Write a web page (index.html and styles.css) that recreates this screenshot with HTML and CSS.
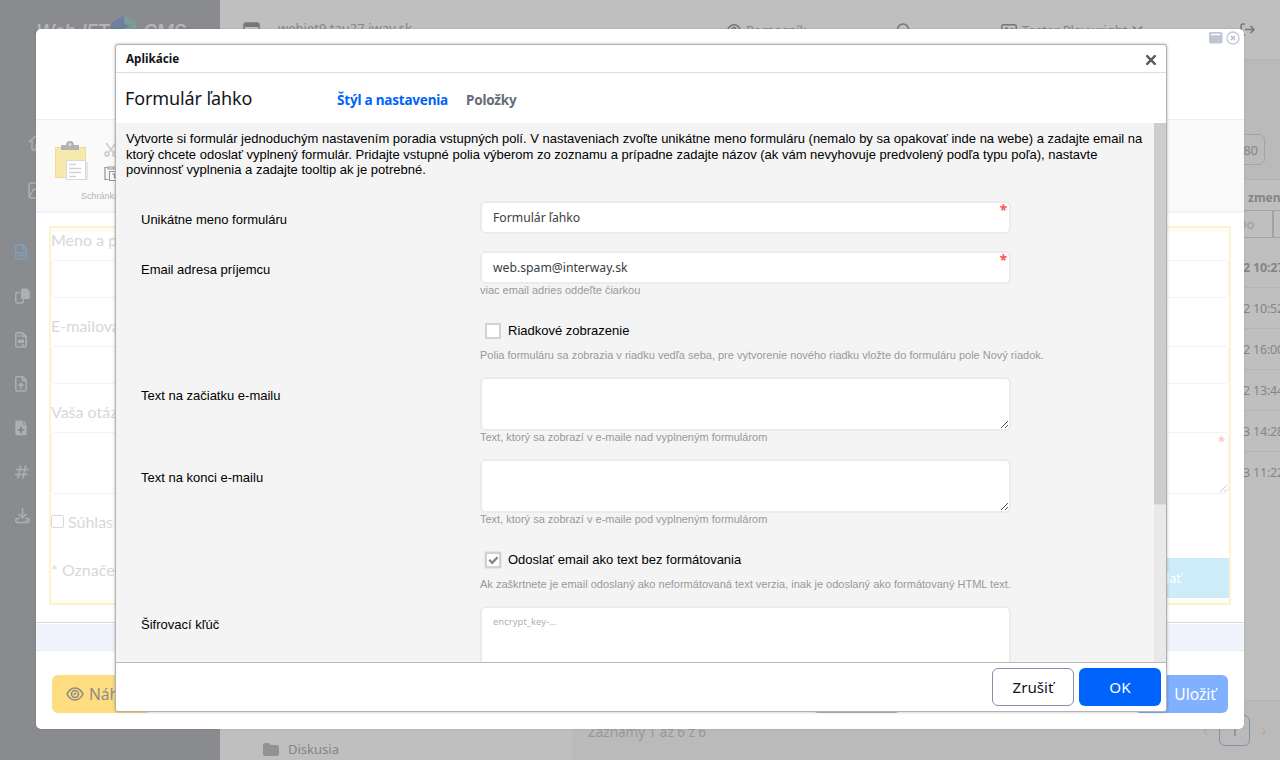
FILE: index.html
```
<!DOCTYPE html>
<html lang="sk">
<head>
<meta charset="utf-8">
<title>Aplikácie</title>
<link rel="stylesheet" href="styles.css">
</head>
<body>
<div class="app">
  <aside class="sidebar">
    <div class="logo">
      <span>WebJET</span>
      <svg width="26" height="30" viewBox="0 0 26 30"><path d="M0 8 13 0v12L0 20z" fill="#737d9f"/><path d="M13 0l12 7-12 7z" fill="#7b9b98"/><path d="M0 13l13-5 12 8-12 8z" fill="#66829c"/><path d="M12 14l13-5v7l-13 8z" fill="#79a293"/></svg>
      <span>CMS</span>
    </div>
    <div class="main-icons">
      <svg width="20" height="18" viewBox="0 0 20 18"><path d="M1 9 10 1l9 8M4 7v8.500a1.500 1.500 0 0 0 1.500 1.500H8v-5h4v5h3"/></svg>
      <svg width="20" height="18" viewBox="0 0 20 18"><path d="M19 1H3a2 2 0 0 0-2 2v11a2 2 0 0 0 2 2h16M2 14l3-6q.6-1 2-1h10"/></svg>
    </div>
    <nav class="side-nav">
      <svg class="active" viewBox="0 0 16 16"><path d="M2.500.8h5.200l3.500 3.500v9.400a1.400 1.400 0 0 1-1.400 1.400H2.200A1.400 1.400 0 0 1 .8 13.700V2.200A1.400 1.400 0 0 1 2.500.8zM7.500 1v3.500H11M3.300 8.800h5.400M3.300 11.500h5.400"/></svg>
      <svg viewBox="0 0 16 16"><path d="M4 4.500H2.300A1.500 1.500 0 0 0 .8 6v7.500A1.500 1.500 0 0 0 2.300 15h4.500a1.500 1.500 0 0 0 1.500-1.500V12"/><path class="fill" d="M7.500.5h4.500L14.800 3v6.500a1.500 1.500 0 0 1-1.500 1.500H7.500A1.500 1.500 0 0 1 6 9.500V2A1.500 1.500 0 0 1 7.500.5z"/></svg>
      <svg viewBox="0 0 16 16"><path d="M2.200.8h5.500l3.500 3.500v9.400a1.400 1.400 0 0 1-1.400 1.400H2.200A1.400 1.400 0 0 1 .8 13.700V2.200A1.400 1.400 0 0 1 2.200.8zM7.500 1v3.500H11M3 4h2M7 13h2"/><path class="fill" d="M3 7.500h6v3.500H3z"/></svg>
      <svg viewBox="0 0 16 16"><path d="M2.200.8h5.500l3.500 3.500v9.400a1.400 1.400 0 0 1-1.400 1.400H2.200A1.400 1.400 0 0 1 .8 13.700V2.200A1.400 1.400 0 0 1 2.200.8zM7.500 1v3.500H11M6 12.500V7.500M3.800 9.500 6 7.300l2.200 2.200"/></svg>
      <svg viewBox="0 0 16 16"><path class="fill" d="M1.500.5h6v4h4V14a1.300 1.300 0 0 1-1.300 1.300H1.500A1.300 1.300 0 0 1 .3 14V1.800A1.300 1.300 0 0 1 1.500.5zM8.500.5l3 3h-3z"/><path class="cut" d="M6 7.200v5.200M3.400 9.800h5.200"/></svg>
      <svg viewBox="0 0 16 16"><path d="M5.500 2 3 14M10.500 2 8 14M1.500 5.500H13M.5 10.500H12"/></svg>
      <svg viewBox="0 0 16 16"><path d="M7.500.5v9M4 6.300l3.500 3.500L11 6.300M4 10.500H2.300A1.500 1.500 0 0 0 .8 12v1a1.500 1.500 0 0 0 1.500 1.500h10.400a1.500 1.500 0 0 0 1.500-1.500v-1a1.500 1.500 0 0 0-1.500-1.500H11M11 12.700h1"/></svg>
    </nav>
  </aside>
  <header class="topbar">
    <div class="domain">
      <svg width="17" height="16" viewBox="0 0 17 16"><rect x="1" y="1" width="15" height="14" rx="2" /><path d="M1 3h15" stroke-width="4"/></svg>
      <span>webjet9.tau27.iway.sk</span>
    </div>
    <div class="help">
      <svg width="14" height="14" viewBox="0 0 14 14"><circle cx="7" cy="7" r="6.200"/><path d="M5 5.500a2 2 0 1 1 2.500 2L7 8.500M7 10v1"/></svg>
      <span>Pomocník</span>
    </div>
    <div class="search"><svg width="14" height="14" viewBox="0 0 14 14"><circle cx="7" cy="6.500" r="5.500"/></svg></div>
    <div class="user">
      <svg width="16" height="14" viewBox="0 0 16 14"><rect x=".8" y=".8" width="14.400" height="12.400" rx="1.500"/><path d="M9.500 5h3M9.500 8h3"/><circle cx="5.500" cy="5" r="1"/></svg>
      <span>Tester Playwright</span>
      <svg width="11" height="10" viewBox="0 0 11 10"><path d="M1 2.500l4.500 4.500L10 2.500"/></svg>
    </div>
    <div class="logout"><svg width="15" height="13" viewBox="0 0 15 13"><path d="M5 1H3a2 2 0 0 0-2 2v7a2 2 0 0 0 2 2h2M5 6.500h9M10.500 3l3.500 3.500-3.500 3.500"/></svg></div>
  </header>
  <section class="tree">
    <div class="tree-item">
      <svg width="16" height="13" viewBox="0 0 16 13"><path d="M2 0h4l2 2h6a2 2 0 0 1 2 2v7a2 2 0 0 1-2 2H2a2 2 0 0 1-2-2V2a2 2 0 0 1 2-2z" fill="#929397"/></svg>
      <span>Diskusia</span>
    </div>
  </section>
  <main class="list">
    <div class="list-tools"><span class="page-size">80</span></div>
    <div class="list-head">zmen</div>
    <div class="list-filter"><span>Do</span><span></span></div>
    <div class="row strong">2 10:27</div>
    <div class="row">2 10:52</div>
    <div class="row">2 16:00</div>
    <div class="row">2 13:44</div>
    <div class="row">3 14:28</div>
    <div class="row last">3 11:22</div>
    <footer class="list-foot">
      <span class="count">Záznamy 1 až 6 z 6</span>
      <div class="pager"><i>‹</i><b>1</b><i>›</i></div>
    </footer>
  </main>
</div>

<div class="editor">
  <header class="editor-head">
    <svg width="14" height="12" viewBox="0 0 14 12"><rect width="13.500" height="11.500" rx="2" fill="#bfc3d3"/><path d="M2 2.500h9.500" stroke="#fff" stroke-width="1.500"/></svg>
    <svg width="14" height="14" viewBox="0 0 14 14"><circle cx="7" cy="7" r="6" fill="none" stroke="#c6c9d8" stroke-width="1.300"/><path d="M5 5l4 4M9 5l-4 4" stroke="#b7bbcd" stroke-width="1.400"/></svg>
  </header>
  <div class="ribbon">
    <svg width="34" height="42" viewBox="0 0 34 42"><rect x=".5" y="7.500" width="30" height="30" fill="#f6e9ae" stroke="#f0dc95"/><path d="M6 5h5a4 4 0 0 1 8 0h5v5H6z" fill="#b3b3b3"/><circle cx="15" cy="4.500" r="1.300" fill="#f6e9ae"/><path d="M14 22h19v18H14z" fill="#e6e6e6"/><path d="M11.500 20.500h19v19h-19z" fill="#fff" stroke="#d9d9d9"/><path d="M14 24.500h7M14 28.500h12M14 32.500h12M14 36.500h7" stroke="#d3d3d3" stroke-width="1.500"/></svg>
    <div class="ribbon-small">
      <svg width="14" height="14" viewBox="0 0 14 14"><g fill="none" stroke="#cfcfcf" stroke-width="1.800"><path d="M2 0l7 9M12 0 5 9"/><circle cx="3" cy="11" r="2"/><circle cx="11" cy="11" r="2"/></g></svg>
      <svg width="14" height="16" viewBox="0 0 14 16"><path d="M3 1.500H1v12h3M4 1h6v2H4zM5.500 5.500h9v9h-9zM8 8h5M10.500 8v4" fill="none" stroke="#949494" stroke-width="1.200"/></svg>
    </div>
    <span class="ribbon-label">Schránka</span>
  </div>
  <div class="canvas">
    <div class="form-preview">
      <label>Meno a priezvisko</label><div class="box"></div>
      <label>E-mailová adresa</label><div class="box"></div>
      <label>Vaša otázka</label>
      <div class="box area"><em>*</em><svg width="9" height="9" viewBox="0 0 9 9"><path d="M1 8l7-7M5 8l3-3" stroke="#ccc" fill="none"/></svg></div>
      <div class="agree"><i></i><span>Súhlas</span></div>
      <div class="send-row"><span>* Označené</span><b>Odoslať</b></div>
    </div>
  </div>
  <div class="status"></div>
  <footer class="editor-foot">
    <div class="btn yellow"><svg width="20" height="16" viewBox="0 0 20 16"><path d="M2 8c2-4 4.600-6 8-6s6 2 8 6c-2 4-4.600 6-8 6s-6-2-8-6z"/><circle cx="10" cy="8" r="3.500"/><path d="M8.500 8.500A2 2 0 0 0 10.500 6.500"/></svg><span>Náhľad</span></div>
    <div class="btn grey"></div>
    <div class="btn blue">Uložiť</div>
  </footer>
</div>

<div class="dialog">
  <header class="dialog-title"><span>Aplikácie</span><svg width="12" height="12" viewBox="0 0 12 12"><path d="M2.200 2.200l7.600 7.600M9.800 2.200l-7.600 7.600" stroke="#5e5e5e" stroke-width="2.500" stroke-linecap="round"/></svg></header>
  <div class="dialog-tabs"><h1>Formulár ľahko</h1><span class="tab on">Štýl a nastavenia</span><span class="tab">Položky</span></div>
  <div class="dialog-body">
    <div class="scroll-area">
      <p>Vytvorte si formulár jednoduchým nastavením poradia vstupných polí. V nastaveniach zvoľte unikátne meno formuláru (nemalo by sa opakovať inde na webe) a zadajte email na ktorý chcete odoslať vyplnený formulár. Pridajte vstupné polia výberom zo zoznamu a prípadne zadajte názov (ak vám nevyhovuje predvolený podľa typu poľa), nastavte povinnosť vyplnenia a zadajte tooltip ak je potrebné.</p>
      <div class="fields">
        <label>Unikátne meno formuláru</label>
        <div class="cell"><div class="input">Formulár ľahko<em>*</em></div></div>
        <label>Email adresa príjemcu</label>
        <div class="cell"><div class="input">web.spam@interway.sk<em>*</em></div><small>viac email adries oddeľte čiarkou</small></div>
        <label></label>
        <div class="cell"><div class="check"><i></i>Riadkové zobrazenie</div><small>Polia formuláru sa zobrazia v riadku vedľa seba, pre vytvorenie nového riadku vložte do formuláru pole Nový riadok.</small></div>
        <label>Text na začiatku e-mailu</label>
        <div class="cell"><div class="textarea"><svg width="9" height="9" viewBox="0 0 9 9"><path d="M1 8l7-7M5 8l3-3" stroke="#555" fill="none"/></svg></div><small>Text, ktorý sa zobrazí v e-maile nad vyplneným formulárom</small></div>
        <label>Text na konci e-mailu</label>
        <div class="cell"><div class="textarea"><svg width="9" height="9" viewBox="0 0 9 9"><path d="M1 8l7-7M5 8l3-3" stroke="#555" fill="none"/></svg></div><small>Text, ktorý sa zobrazí v e-maile pod vyplneným formulárom</small></div>
        <label></label>
        <div class="cell"><div class="check"><i class="focus"><svg width="11" height="10" viewBox="0 0 11 10"><path d="M1.200 4.800l3 3L9.500 2.200" fill="none" stroke="#858585" stroke-width="2.300"/></svg></i>Odoslať email ako text bez formátovania</div><small>Ak zaškrtnete je email odoslaný ako neformátovaná text verzia, inak je odoslaný ako formátovaný HTML text.</small></div>
        <label>Šifrovací kľúč</label>
        <div class="cell"><div class="textarea tall">encrypt_key-…</div></div>
      </div>
    </div>
    <div class="scrollbar"><div class="thumb"></div></div>
  </div>
  <footer class="dialog-foot"><button class="cancel">Zrušiť</button><button class="ok">OK</button></footer>
</div>
</body>
</html>
```
FILE: styles.css
```
* { box-sizing: border-box; }
body { margin: 0; width: 1280px; height: 760px; overflow: hidden; position: relative; font-family: "Noto Sans", sans-serif; }
svg { flex: none; display: block; }
i, em { font-style: normal; }

/* Dimmed application behind the editor */
.app { display: grid; grid-template: 60px 700px / 220px 352px 708px; height: 760px; background: #bfbfbf; color: #858585; }
.sidebar { grid-row: 1 / 3; background: #8a8b8f; }
.logo { height: 60px; padding: 15px 0 0 36px; display: flex; align-items: flex-start; gap: 6px; color: #b6b6b8; font: italic 500 19px/24px "Inter", sans-serif; }
.logo span { margin-top: 5px; width: 69px; letter-spacing: -.4px; }
.main-icons { margin: 73px 0 0 28px; display: flex; flex-direction: column; gap: 31px; }
.sidebar svg { fill: none; }
.main-icons svg, .side-nav svg { stroke: #aeafb1; stroke-width: 1.5; stroke-linecap: round; stroke-linejoin: round; }
.side-nav { margin: 44px 0 0 15px; display: flex; flex-direction: column; gap: 28px; }
.side-nav svg { width: 16px; height: 16px; }
.side-nav svg.active { stroke: #7ba0be; }
.side-nav .fill { fill: #aeafb1; stroke: none; }
.side-nav .cut { stroke: #85868a; stroke-width: 1.8; }

.topbar { grid-column: 2 / 4; display: flex; padding: 0 0 0 23px; border-bottom: 1px solid #b4b4b4; font-size: 13px; line-height: 18px; }
.topbar > div { display: flex; gap: 5px; padding-top: 19px; }
.topbar svg { fill: none; stroke: #777; stroke-width: 1.5; margin-top: 3px; }
.topbar .domain { width: 484px; gap: 18px; }
.topbar .help { width: 169px; margin-top: 2px; }
.topbar .search { width: 105px; margin-top: 1px; }
.topbar .user { width: 239px; margin-top: 2px; }
.topbar .logout { margin-top: 1px; }

.tree { display: flex; flex-direction: column; justify-content: flex-end; padding: 0 0 2px 43px; }
.tree-item { display: flex; align-items: center; gap: 9px; font-size: 13px; line-height: 18px; color: #868686; }

.list { display: grid; grid-template-columns: 708px; grid-template-rows: 120px 30px 28px 50px 41px 41px 41px 41px 1fr 60px; background: #bfbfbf; overflow: hidden; font-size: 13px; }
.list-tools { background: #bababa; border-bottom: 1px solid #b2b2b2; padding-top: 74px; display: flex; justify-content: flex-end; }
.page-size { width: 94px; height: 31px; margin-right: 15px; border: 1px solid #a3a4ab; border-radius: 6px; line-height: 30px; text-align: right; padding-right: 6px; }
.list-head { padding-left: 676px; font-weight: 700; line-height: 35px; font-size: 12px; }
.list-filter { display: grid; grid-template-columns: 702px 6px; border: 1px solid #a1a2a8; border-width: 1px 0; color: #999; line-height: 26px; }
.list-filter span { padding-left: 665px; border-right: 2px solid #a1a2a8; }
.list-filter span + span { padding: 0; border: 0; }
.row { padding: 10px 0 0 671px; line-height: 21px; border-bottom: 1px solid #b5b5b5; white-space: nowrap; font-size: 12.5px; letter-spacing: -.2px; }
.row.strong { padding-top: 19px; font-weight: 700; }
.row.last { border: 0; }
.list-foot { display: flex; justify-content: space-between; background: #bababa; border-top: 1px solid #b3b3b3; padding: 14px 14px 0 16px; color: #97979a; }
.count { font-size: 13.5px; line-height: 34px; }
.pager { display: flex; gap: 11px; line-height: 28px; color: #adadad; }
.pager i { font-size: 18px; width: 5px; }
.pager b { width: 31px; height: 31px; border: 1px solid #8290aa; border-radius: 6px; text-align: center; font-weight: 400; font-size: 14px; color: #7f8795; line-height: 30px; }

/* Page editor window */
.editor { position: absolute; left: 36px; top: 29px; width: 1208px; height: 700px; background: #fff; border-radius: 5px; overflow: hidden; display: grid; grid-template-rows: 90px 94px 409px 29px 78px; box-shadow: 0 0 2px rgba(0,0,0,.15); }
.editor-head { display: flex; justify-content: flex-end; gap: 3px; padding: 2px 4px 0 0; }
.editor-head svg:first-child { margin-top: 1px; }
.ribbon { border-top: 1px solid #efefef; border-bottom: 2px solid #eef3f9; background: #fafafa; display: grid; grid-template: 55px 1fr / 34px 1fr; padding: 20px 0 0 19px; column-gap: 15px; }
.ribbon-small { display: flex; flex-direction: column; gap: 9px; padding-top: 3px; }
.ribbon-label { grid-column: 1 / 3; margin-top: -5px; padding-left: 26px; font: 9px/12px "Liberation Sans", sans-serif; color: #b5b5b5; }
.canvas { padding: 13px 13px 0; }
.form-preview { height: 379px; border: 2px solid #fef3cf; box-shadow: inset 0 4px #fffcf1, inset 0 -4px #fffcf1; display: flex; flex-direction: column; font: 16px/24px "Lato", sans-serif; color: #d7d8da; }
.form-preview label { height: 32px; }
.box { height: 38px; margin-bottom: 16px; border: 1px solid #f3f3f5; border-radius: 4px; }
.box.area { height: 62px; display: flex; flex-direction: column; justify-content: space-between; align-items: flex-end; }
.box em { color: #ffc4c4; font: 700 13px/16px "Noto Sans", sans-serif; margin-right: 3px; }
.agree { display: flex; align-items: center; gap: 4px; height: 24px; }
.agree i { width: 13px; height: 13px; margin-top: -2px; border: 1px solid #d9d9dc; border-radius: 2px; }
.send-row { display: flex; justify-content: space-between; margin-top: 24px; line-height: 24px; }
.send-row b { width: 146px; height: 40px; padding-left: 3px; background: #cdecf9; color: #fff; text-align: center; font: 13px/40px "Noto Sans", sans-serif; }
.status { border-top: 1px solid #d9d9db; border-bottom: 1px solid #ececef; background: linear-gradient(#fff 1px, #f1f4fd 1px); }
.editor-foot { display: flex; padding: 24px 16px 0; }
.btn { height: 38px; border-radius: 6px; font-size: 15.6px; line-height: 38px; white-space: nowrap; }
.btn.yellow { width: 100px; background: #fddd7f; color: #8d8b85; display: flex; align-items: center; gap: 4px; padding-left: 13px; overflow: hidden; }
.btn.yellow svg { fill: none; stroke: #8d8b85; stroke-width: 1.6; }
.btn.grey { width: 89px; margin-left: 660px; background: #b5b9cb; }
.btn.blue { width: 94px; margin-left: auto; background: #80b1ff; color: #fff; text-align: right; padding-right: 12px; }

/* Application dialog */
.dialog { position: absolute; left: 115px; top: 44px; width: 1052px; height: 668px; border: 1px solid #b2b2b2; border-radius: 3px; background: #fff; overflow: hidden; display: grid; grid-template-rows: 28px 50px 539px 49px; box-shadow: 0 0 3px rgba(0,0,0,.3); }
.dialog-title { display: flex; justify-content: space-between; padding: 0 9px 0 10px; border-bottom: 1px solid #dcdee3; font-size: 11.7px; font-weight: 700; line-height: 27px; color: #13151b; }
.dialog-title svg { margin-top: 9px; }
.dialog-tabs { display: grid; grid-template-columns: 211px 129px 1fr; padding-left: 9px; line-height: 54px; }
h1 { margin: 0; font-size: 18px; font-weight: 400; letter-spacing: -.12px; line-height: 50px; color: #13151b; }
.tab { font-size: 13.5px; font-weight: 700; letter-spacing: -.2px; color: #666b7a; padding-left: 1px; }
.tab.on { color: #0063fb; }
.dialog-body { display: grid; grid-template-columns: 1038px 12px; background: #f4f4f4; font: 13px/15.6px "Liberation Sans", sans-serif; color: #000; overflow: hidden; }
.scroll-area { padding: 8px 10px 0; overflow: hidden; }
.scroll-area p { margin: 0 -6px 23px 0; height: 47px; }
.fields { display: grid; grid-template: 50px 68px 58px 82px 89px 58px 90px / 339px 1fr; padding-left: 15px; }
.fields label { padding-top: 11px; }
.input, .textarea { width: 531px; border: 2px solid #ebebed; border-radius: 6px; background: #fff; font: 12.2px/30px "Noto Sans", sans-serif; color: #3b3d42; }
.input { height: 33px; padding: 0 2px 0 11px; display: flex; justify-content: space-between; }
.input em { color: #ff5454; font: 700 13.5px/14px "Noto Sans", sans-serif; }
.textarea { height: 54px; display: flex; justify-content: flex-end; align-items: flex-end; }
.textarea.tall { height: 80px; justify-content: flex-start; align-items: flex-start; padding: 7px 11px; font-size: 9.5px; line-height: 14px; color: #b1b1b3; }
small { display: block; font-size: 11px; line-height: 12px; color: #999; white-space: nowrap; }
.cell { min-width: 0; }
.check { height: 16px; margin: 4px 0 10px 5px; display: flex; align-items: center; gap: 7px; line-height: 18px; }
.check i { width: 16px; height: 16px; border: 2px solid #d2d2d2; background: #fff; border-radius: 1px; display: grid; place-items: center; }
.check i.focus { box-shadow: 0 0 0 1px #e6e6e6; }
.scrollbar { background: #e9e9e9; }
.thumb { height: 382px; background: #cdcdcd; border-bottom: 1px solid #ddd; }
.dialog-foot { border-top: 1px solid #b9b9b9; display: flex; justify-content: flex-end; gap: 5px; padding: 5px 5px 0; }
button { width: 82px; height: 38px; border-radius: 6px; font: 15.2px/34px "Noto Sans", sans-serif; padding: 0; }
.cancel { border: 1px solid #868ea8; background: #fff; color: #13151b; }
.ok { border: 0; background: #0063fb; color: #fff; }
```
